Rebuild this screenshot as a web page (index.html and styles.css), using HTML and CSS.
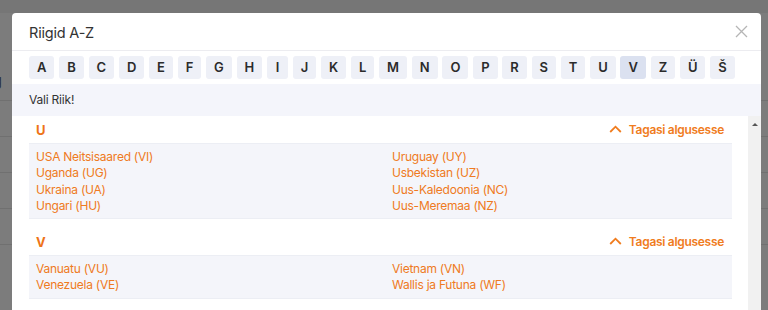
FILE: index.html
```html
<!DOCTYPE html>
<html lang="et">
<head>
<meta charset="utf-8">
<title>Riigid A-Z</title>
<link rel="stylesheet" href="styles.css">
</head>
<body>
<div class="page">
  <div class="page-top"></div>
  <div class="page-row page-row-label">ng</div>
  <div class="page-row"></div>
  <div class="page-row"></div>
  <div class="page-row"></div>
  <div class="page-row"></div>
</div>

<div class="modal">
  <div class="modal-header">
    <h1 class="modal-title">Riigid A-Z</h1>
    <button class="close" aria-label="Sulge">
      <svg width="13" height="13" viewBox="0 0 13 13"><path d="M1 1L12 12M12 1L1 12" stroke="#b5b5b5" stroke-width="1.3" fill="none"/></svg>
    </button>
  </div>
  <div class="letters">
    <span class="letter">A</span><span class="letter">B</span><span class="letter">C</span><span class="letter">D</span><span class="letter">E</span><span class="letter">F</span><span class="letter">G</span><span class="letter">H</span><span class="letter">I</span><span class="letter">J</span><span class="letter">K</span><span class="letter">L</span><span class="letter">M</span><span class="letter">N</span><span class="letter">O</span><span class="letter">P</span><span class="letter">R</span><span class="letter">S</span><span class="letter">T</span><span class="letter">U</span><span class="letter active">V</span><span class="letter">Z</span><span class="letter">Ü</span><span class="letter">Š</span>
  </div>
  <div class="prompt">Vali Riik!</div>
  <div class="scroll">
    <div class="scroll-content">
      <section class="group">
        <div class="group-head">
          <span class="group-letter">U</span>
          <a class="back"><svg width="13" height="8" viewBox="0 0 13 8"><path d="M1.2 7L6.5 1.7L11.8 7" stroke="#f07c1e" stroke-width="1.8" fill="none"/></svg>Tagasi algusesse</a>
        </div>
        <div class="group-list">
          <div class="col">
            <a>USA Neitsisaared (VI)</a>
            <a>Uganda (UG)</a>
            <a>Ukraina (UA)</a>
            <a>Ungari (HU)</a>
          </div>
          <div class="col">
            <a>Uruguay (UY)</a>
            <a>Usbekistan (UZ)</a>
            <a>Uus-Kaledoonia (NC)</a>
            <a>Uus-Meremaa (NZ)</a>
          </div>
        </div>
      </section>
      <section class="group">
        <div class="group-head">
          <span class="group-letter">V</span>
          <a class="back"><svg width="13" height="8" viewBox="0 0 13 8"><path d="M1.2 7L6.5 1.7L11.8 7" stroke="#f07c1e" stroke-width="1.8" fill="none"/></svg>Tagasi algusesse</a>
        </div>
        <div class="group-list">
          <div class="col">
            <a>Vanuatu (VU)</a>
            <a>Venezuela (VE)</a>
          </div>
          <div class="col">
            <a>Vietnam (VN)</a>
            <a>Wallis ja Futuna (WF)</a>
          </div>
        </div>
      </section>
    </div>
    <div class="scrollbar"><span class="arrow"></span></div>
  </div>
</div>
</body>
</html>
```

FILE: styles.css
```css
* { box-sizing: border-box; }
html, body { margin: 0; height: 100%; }
body {
  background: #7c7c7c;
  font-family: Inter, "Noto Sans", sans-serif;
  overflow: hidden;
  position: relative;
}
.page { height: 100%; }
.page-top { height: 13px; background: #767676; }
.page-row {
  height: 36px;
  border-bottom: 1px solid #707070;
  font-size: 15px;
  color: #2e2e2e;
  padding-top: 9px;
}
.page-row-label { height: 88px; padding-top: 58px; margin-left: -16px; }

.modal {
  position: absolute;
  left: 12px;
  top: 13px;
  width: 749px;
  bottom: -10px;
  background: #fff;
  border-radius: 4px 4px 0 0;
  display: flex;
  flex-direction: column;
}
.modal-header {
  height: 38px;
  display: flex;
  align-items: center;
  justify-content: space-between;
  padding: 0 13px 0 17px;
  border-bottom: 1px solid #ececf0;
}
.modal-title {
  margin: 0;
  font-size: 14.5px;
  letter-spacing: -0.2px;
  font-weight: 400;
  color: #333;
  padding-top: 2px;
}
.close {
  border: 0;
  background: none;
  padding: 0;
  width: 13px;
  height: 13px;
  display: flex;
}
.letters {
  display: flex;
  gap: 4.75px;
  padding: 5px 17px 5px 17px;
}
.letter {
  height: 23px;
  line-height: 23px;
  padding: 0 8px;
  min-width: 21px;
  text-align: center;
  font-size: 13px;
  font-weight: 600;
  color: #2b2b2b;
  background: #eef0f7;
  border-radius: 3px;
}
.letter.active { background: #dbe1f0; }
.prompt {
  height: 32px;
  line-height: 32px;
  padding-left: 17px;
  font-size: 12px;
  letter-spacing: -0.2px;
  color: #333;
  background: #f4f5fb;
}
.scroll {
  flex: 1;
  display: flex;
  min-height: 0;
}
.scroll-content {
  flex: 1;
  padding: 0 16px 0 17px;
}
.scrollbar {
  width: 13px;
  background: #f1f1f1;
  display: flex;
  justify-content: center;
  padding-top: 7px;
}
.arrow {
  width: 0;
  height: 0;
  border-left: 3px solid transparent;
  border-right: 3px solid transparent;
  border-bottom: 3px solid #555;
}
.group + .group { margin-top: 9px; }
.group-head {
  height: 27px;
  display: flex;
  align-items: center;
  justify-content: space-between;
  padding: 0 8px 0 7px;
}
.group-letter {
  font-size: 13px;
  font-weight: 700;
  color: #ee7419;
}
.back {
  display: flex;
  align-items: center;
  gap: 7px;
  font-size: 12px;
  letter-spacing: -0.3px;
  font-weight: 600;
  color: #f07c1e;
}
.back svg { margin-top: -1px; }
.group-list {
  display: grid;
  grid-template-columns: 356px 1fr;
  background: #f4f5fa;
  border-top: 1px solid #eceef4;
  border-bottom: 1px solid #eceef4;
  padding: 5px 7px 4px;
}
.col { display: flex; flex-direction: column; }
.col a {
  font-size: 12px;
  letter-spacing: -0.25px;
  line-height: 16.3px;
  color: #ef7a22;
}
```
